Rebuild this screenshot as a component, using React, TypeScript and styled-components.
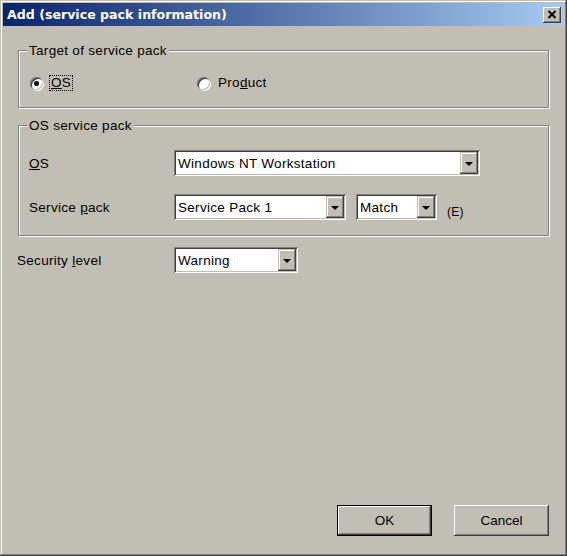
import styled, { createGlobalStyle } from 'styled-components'

const FACE = '#c2beb3'
const SHADOW = '#808080'
const DARK = '#404040'

const GlobalStyle = createGlobalStyle`
  html, body {
    margin: 0;
    padding: 0;
    background: ${FACE};
  }
  body {
    font-family: 'Liberation Sans', Arial, sans-serif;
    font-size: 13.5px;
    letter-spacing: 0.3px;
    color: #000;
  }
`

const Window = styled.div`
  width: 567px;
  height: 556px;
  box-sizing: border-box;
  padding: 3px;
  display: flex;
  flex-direction: column;
  background: ${FACE};
  box-shadow: inset -1px -1px 0 ${DARK}, inset 1px 1px 0 ${FACE},
    inset -2px -2px 0 ${SHADOW}, inset 2px 2px 0 #fff;
`

const TitleBar = styled.div`
  height: 23px;
  flex: none;
  display: flex;
  align-items: center;
  justify-content: space-between;
  padding: 0 3px 0 4px;
  background: linear-gradient(to right, #0a246a, #a6caf0);
`

const TitleText = styled.span`
  color: #fff;
  font-family: 'DejaVu Sans', 'Liberation Sans', sans-serif;
  font-weight: bold;
  font-size: 12.6px;
  letter-spacing: 0;
`

const CloseButton = styled.div`
  width: 18px;
  height: 16px;
  display: flex;
  align-items: center;
  justify-content: center;
  background: ${FACE};
  box-shadow: inset -1px -1px 0 ${DARK}, inset 1px 1px 0 #fff,
    inset -2px -2px 0 ${SHADOW};
`

const Body = styled.div`
  flex: 1;
  display: flex;
  flex-direction: column;
  padding: 17px 15px 17px 14px;
`

const GroupBox = styled.fieldset<{ $gap?: number }>`
  margin: ${({ $gap }) => $gap ?? 0}px 0 0 1px;
  padding: 0;
  min-width: 0;
  border: 1px solid ${SHADOW};
  box-shadow: inset 1px 1px 0 #fff, 1px 1px 0 #fff;
`

const Caption = styled.legend`
  margin-left: 8px;
  padding: 0 2px;
  line-height: 15px;
  background: ${FACE};
`

const RadioRow = styled.div`
  display: grid;
  grid-template-columns: 167px auto;
  align-items: center;
  padding: 17px 0 16px 11px;
`

const RadioItem = styled.label`
  display: flex;
  align-items: center;
  gap: 6px;
`

const RadioCircle = styled.span<{ $checked?: boolean }>`
  position: relative;
  width: 13px;
  height: 13px;
  border-radius: 50%;
  background: #fff;
  box-shadow: inset 1px 1px 0 ${SHADOW}, inset 2px 2px 0 ${DARK},
    inset -1px -1px 0 ${FACE}, 1px 1px 0 #fff;

  &::after {
    content: '';
    display: ${({ $checked }) => ($checked ? 'block' : 'none')};
    position: absolute;
    left: 4px;
    top: 4px;
    width: 5px;
    height: 5px;
    border-radius: 50%;
    background: #000;
  }
`

const FocusText = styled.span<{ $focused?: boolean }>`
  padding: 0 1px;
  line-height: 14px;
  border: 1px dotted ${({ $focused }) => ($focused ? '#000' : 'transparent')};
`

const FormRows = styled.div`
  display: flex;
  flex-direction: column;
  gap: 18px;
  padding: 17px 0 15px 10px;
`

const FieldRow = styled.div<{ $labelWidth: number }>`
  display: grid;
  grid-template-columns: ${({ $labelWidth }) => $labelWidth}px auto;
  align-items: center;
`

const Controls = styled.div`
  display: flex;
  align-items: center;
  gap: 10px;
`

const Combo = styled.div<{ $width: number }>`
  width: ${({ $width }) => $width}px;
  height: 26px;
  box-sizing: border-box;
  display: flex;
  align-items: center;
  padding: 2px;
  background: #fff;
  box-shadow: inset 1px 1px 0 ${SHADOW}, inset -1px -1px 0 #fff,
    inset 2px 2px 0 ${DARK}, inset -2px -2px 0 ${FACE};
`

const ComboValue = styled.span`
  flex: 1;
  padding-left: 2px;
  white-space: nowrap;
  overflow: hidden;
`

const DropButton = styled.span`
  width: 18px;
  height: 22px;
  flex: none;
  display: flex;
  align-items: center;
  justify-content: center;
  background: ${FACE};
  box-shadow: inset -1px -1px 0 ${DARK}, inset 1px 1px 0 ${FACE},
    inset -2px -2px 0 ${SHADOW}, inset 2px 2px 0 #fff;

  &::before {
    content: '';
    border-left: 4px solid transparent;
    border-right: 4px solid transparent;
    border-top: 4px solid #000;
    margin-top: 1px;
  }
`

const SecurityRow = styled(FieldRow)`
  margin-top: 11px;
`

const ButtonBar = styled.div`
  margin-top: auto;
  display: flex;
  justify-content: flex-end;
  gap: 22px;
`

const PushButton = styled.button<{ $default?: boolean }>`
  width: 95px;
  height: 31px;
  padding: 0;
  font: inherit;
  color: #000;
  background: ${FACE};
  border: ${({ $default }) => ($default ? '1px solid #000' : 'none')};
  box-shadow: inset -1px -1px 0 ${DARK}, inset 1px 1px 0 #fff,
    inset -2px -2px 0 ${SHADOW};
`

const Note = styled.span`
  padding-top: 10px;
  font-size: 12px;
`

export default function App() {
  return (
    <>
      <GlobalStyle />
      <Window>
        <TitleBar>
          <TitleText>Add (service pack information)</TitleText>
          <CloseButton>
            <svg width="10" height="9" viewBox="0 0 10 9">
              <path d="M1.5 1 L8.5 8 M8.5 1 L1.5 8" stroke="#000" strokeWidth="2" />
            </svg>
          </CloseButton>
        </TitleBar>
        <Body>
          <GroupBox>
            <Caption>Target of service pack</Caption>
            <RadioRow>
              <RadioItem>
                <RadioCircle $checked />
                <FocusText $focused>
                  <u>O</u>S
                </FocusText>
              </RadioItem>
              <RadioItem>
                <RadioCircle />
                <FocusText>
                  Pro<u>d</u>uct
                </FocusText>
              </RadioItem>
            </RadioRow>
          </GroupBox>

          <GroupBox $gap={10}>
            <Caption>OS service pack</Caption>
            <FormRows>
              <FieldRow $labelWidth={145}>
                <span>
                  <u>O</u>S
                </span>
                <Combo $width={306}>
                  <ComboValue>Windows NT Workstation</ComboValue>
                  <DropButton />
                </Combo>
              </FieldRow>
              <FieldRow $labelWidth={145}>
                <span>
                  Service <u>p</u>ack
                </span>
                <Controls>
                  <Combo $width={172}>
                    <ComboValue>Service Pack 1</ComboValue>
                    <DropButton />
                  </Combo>
                  <Combo $width={81}>
                    <ComboValue>Match</ComboValue>
                    <DropButton />
                  </Combo>
                  <Note>(E)</Note>
                </Controls>
              </FieldRow>
            </FormRows>
          </GroupBox>

          <SecurityRow $labelWidth={157}>
            <span>
              Security <u>l</u>evel
            </span>
            <Combo $width={124}>
              <ComboValue>Warning</ComboValue>
              <DropButton />
            </Combo>
          </SecurityRow>

          <ButtonBar>
            <PushButton $default>OK</PushButton>
            <PushButton>Cancel</PushButton>
          </ButtonBar>
        </Body>
      </Window>
    </>
  )
}
